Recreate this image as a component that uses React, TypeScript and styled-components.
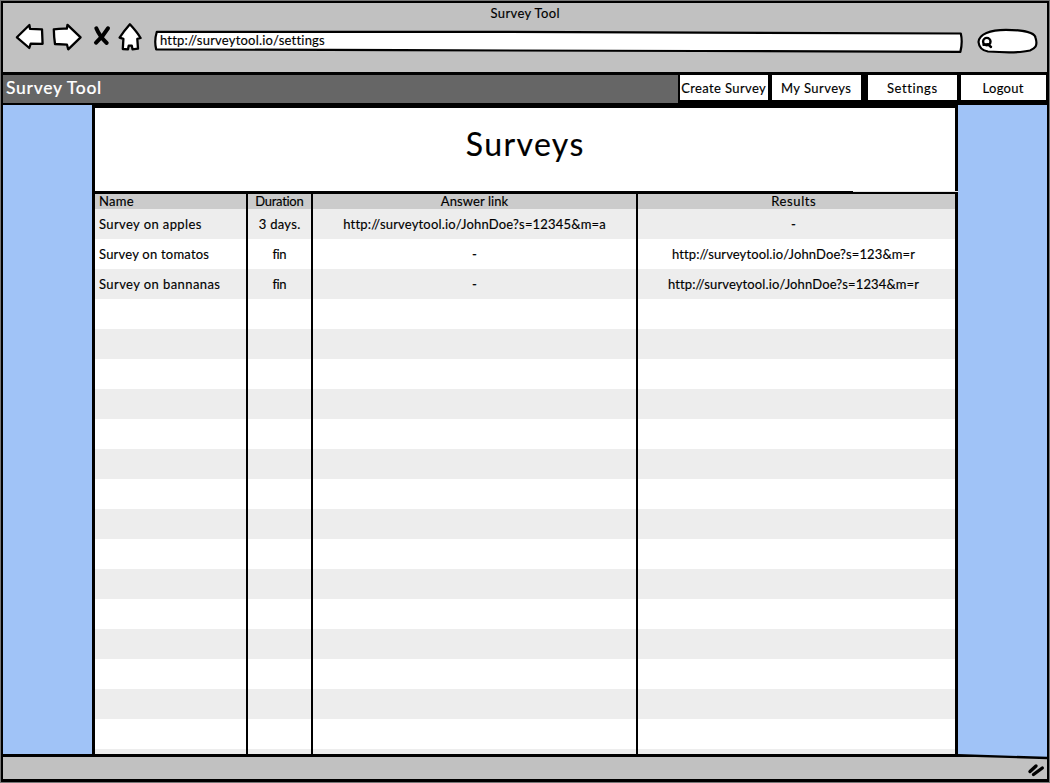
import React from "react";
import styled, { createGlobalStyle } from "styled-components";

const GlobalStyle = createGlobalStyle`
  * { box-sizing: border-box; }
  body { margin: 0; background: #fff; }
  #root { width: 1050px; height: 783px; overflow: hidden; }
`;

const Window = styled.div`
  width: 1050px;
  height: 783px;
  padding: 1px;
  display: flex;
  flex-direction: column;
  font-family: Lato, "Liberation Sans", sans-serif;
  font-size: 13px;
  font-weight: 400;
  color: #000;
  background: #777;
`;

const Frame = styled.div`
  flex: 1;
  display: flex;
  flex-direction: column;
  border: 2px solid #000;
  border-bottom-width: 3px;
`;

const Label = styled.span<{ $track?: number }>`
  letter-spacing: ${(p) => p.$track ?? 0}px;
  margin-right: ${(p) => -(p.$track ?? 0)}px;
  white-space: nowrap;
  -webkit-text-stroke: 0.15px currentColor;
`;

const Chrome = styled.header`
  height: 69px;
  flex: none;
  background: #c1c1c1;
`;

const WindowTitle = styled.div`
  height: 20px;
  display: flex;
  align-items: center;
  justify-content: center;
`;

const Controls = styled.div`
  display: flex;
  height: 34px;
`;

const ToolIcons = styled.svg`
  width: 148px;
  height: 34px;
  flex: none;
`;

const AddressBar = styled.div`
  position: relative;
  width: 814px;
  height: 34px;
  display: flex;
  align-items: flex-start;
  padding: 9px 0 0 9px;
  line-height: 16px;
`;

const Outline = styled.svg`
  position: absolute;
  left: 0;
  top: 0;
`;

const AddressText = styled(Label)`
  position: relative;
`;

const SearchPill = styled.svg`
  width: 76px;
  height: 34px;
  flex: none;
`;

const Nav = styled.nav`
  height: 33px;
  flex: none;
  display: flex;
  background: #666;
  border-top: 3px solid #000;
  border-bottom: 2px solid #000;
`;

const Brand = styled.div`
  flex: 1;
  padding: 0 0 0 3px;
  line-height: 26px;
  font-size: 17.5px;
  font-weight: 500;
  color: #fff;
`;

const NavButtons = styled.div`
  display: flex;
  gap: 4px;
  padding: 0 1px 3px 2px;
  background: #000;
`;

const NavButton = styled.button<{ $width: number; $gap?: number }>`
  width: ${(p) => p.$width}px;
  margin-left: ${(p) => p.$gap ?? 0}px;
  padding: 1px 1px 0 0;
  border: 0;
  background: #fff;
  font: inherit;
  color: #000;
  display: flex;
  align-items: center;
  justify-content: center;
`;

const Body = styled.main`
  height: 649px;
  flex: none;
  display: flex;
  justify-content: center;
  background: #a0c3f7;
`;

const Page = styled.section`
  width: 866px;
  margin-right: 1px;
  display: flex;
  flex-direction: column;
  background: #fff;
  border: solid #000;
  border-width: 3px 3px 0 3px;
`;

const PageTitle = styled.h1`
  position: relative;
  height: 83px;
  margin: 0;
  padding-bottom: 13px;
  display: flex;
  align-items: center;
  justify-content: center;
  font-size: 32px;
  font-weight: 400;

  /* hairline where the title panel's frame stops short of the table */
  &::after {
    content: "";
    position: absolute;
    right: -3px;
    bottom: -1px;
    width: 105px;
    height: 1px;
    background: #e4e4e4;
  }
`;

const Table = styled.div`
  flex: 1;
  min-height: 0;
  display: grid;
  grid-template-columns: 153px 65px 325px 1fr;
  border-top: 3px solid #000;
  overflow: hidden;
  background: linear-gradient(#cbcbcb 15px, transparent 15px),
    repeating-linear-gradient(#ededed 0 30px, #fff 30px 60px) 0 15px;
`;

const Column = styled.div<{ $align?: string; $inset?: number }>`
  display: flex;
  flex-direction: column;
  align-items: ${(p) => p.$align ?? "center"};
  padding-left: ${(p) => (p.$align ? 4.5 : 1)}px;
  padding-right: ${(p) => p.$inset ?? 0}px;
  border-right: 2px solid #000;
  &:last-child { border-right: 0; }
`;

const HeadCell = styled.div`
  height: 15px;
  line-height: 15px;
`;

const Cell = styled.div`
  height: 30px;
  line-height: 31px;
`;

const Footer = styled.footer`
  position: relative;
  flex: 1;
  display: flex;
  justify-content: flex-end;
  background: #c1c1c1;
  border-top: 3px solid #000;
`;

const FooterEdge = styled.svg`
  position: absolute;
  right: 0;
  top: -3px;
`;

const Grip = styled.svg`
  width: 22px;
  height: 22px;
`;

type Text = [string, number];

const columns: { head: Text; align?: string; inset?: number; cells: Text[] }[] = [
  {
    head: ["Name", 0.3],
    align: "flex-start",
    cells: [["Survey on apples", 0.4], ["Survey on tomatos", 0.22], ["Survey on bannanas", 0.42]],
  },
  { head: ["Duration", -0.3], cells: [["3 days.", 0.3], ["fin", -0.4], ["fin", -0.4]] },
  {
    head: ["Answer link", 0.1],
    cells: [["http://surveytool.io/JohnDoe?s=12345&m=a", 0.18], ["-", 0], ["-", 0]],
  },
  {
    head: ["Results", 0.6],
    inset: 6,
    cells: [["-", 0], ["http://surveytool.io/JohnDoe?s=123&m=r", 0.12], ["http://surveytool.io/JohnDoe?s=1234&m=r", 0.13]],
  },
];

const navItems: { text: Text; width: number; gap?: number }[] = [
  { text: ["Create Survey", 0.38], width: 88 },
  { text: ["My Surveys", 0.45], width: 89 },
  { text: ["Settings", 0.6], width: 89, gap: 3 },
  { text: ["Logout", 0.3], width: 85 },
];

export default function App() {
  return (
    <>
      <GlobalStyle />
      <Window>
        <Frame>
          <Chrome>
            <WindowTitle>
              <Label $track={0.37}>Survey Tool</Label>
            </WindowTitle>
            <Controls>
              <ToolIcons viewBox="3 23 148 34" fill="#fff" stroke="#000" strokeWidth="2.3" strokeLinejoin="round" strokeLinecap="round">
                <path d="M16.9 37.3 29.4 25 30 28.9 42 29.3 42.6 43.9 30.7 43.7 29.3 48Z" />
                <path d="M53.8 29.3Q60 28.5 66.8 28.7L67.5 24.8 80.6 37.3 68.2 49.3 67 44.7 55 44Q54 38 53.8 29.3Z" />
                <path d="M129.9 24.3Q137 32 140.6 38L137.3 38.9 138 48.7 132.5 49.3 131.8 45.7 128.7 45.7 128 49.3 122.8 49 123.4 38.9 119.6 37.6Q124 31 129.9 24.3Z" />
                <path d="M96.3 28.3Q100 37 106.7 43M108 28.3Q103.5 36 96 42.7" fill="none" strokeWidth="4" />
              </ToolIcons>
              <AddressBar>
                <Outline width="814" height="34" viewBox="151 23 814 34" fill="#fff" stroke="#000" strokeWidth="2.2" strokeLinejoin="round">
                  <path d="M156.8 31.8 500 31.9 960.8 33.5Q962.8 42 960.4 51.8L700 51 400 50.2 156.2 49.4Q154 41 156.8 31.8Z" />
                </Outline>
                <AddressText $track={0.21}>http://surveytool.io/settings</AddressText>
              </AddressBar>
              <SearchPill viewBox="965 23 76 34" fill="none" stroke="#000" strokeWidth="2.2" strokeLinecap="round">
                <path fill="#fff" d="M978.5 42C979 34 990 29.8 1006 29.8C1024 29.8 1035 33 1035.6 38C1038 46 1035 48.5 1030 50.5C1018 53.5 1000 52.3 988 51.5C982 50.5 979 47 978.5 42Z" />
                <circle cx="986.8" cy="41.6" r="3.7" strokeWidth="2.4" />
                <path d="M983.5 44.8 988 44.3 991 47" strokeWidth="2.4" />
              </SearchPill>
            </Controls>
          </Chrome>
          <Nav>
            <Brand>
              <Label $track={0.7}>Survey Tool</Label>
            </Brand>
            <NavButtons>
              {navItems.map((n) => (
                <NavButton key={n.text[0]} $width={n.width} $gap={n.gap}>
                  <Label $track={n.text[1]}>{n.text[0]}</Label>
                </NavButton>
              ))}
            </NavButtons>
          </Nav>
          <Body>
            <Page>
              <PageTitle>
                <Label $track={1.4}>Surveys</Label>
              </PageTitle>
              <Table>
                {columns.map((c) => (
                  <Column key={c.head[0]} $align={c.align} $inset={c.inset}>
                    <HeadCell>
                      <Label $track={c.head[1]}>{c.head[0]}</Label>
                    </HeadCell>
                    {c.cells.map(([text, track], i) => (
                      <Cell key={i}>
                        <Label $track={track}>{text}</Label>
                      </Cell>
                    ))}
                  </Column>
                ))}
              </Table>
            </Page>
          </Body>
          <Footer>
            <FooterEdge width="89" height="6" viewBox="0 0 89 6">
              <path d="M0 0H89V4.5L0 1Z" fill="#a0c3f7" />
              <path d="M0 3 89 5V6H0Z" fill="#c1c1c1" />
              <path d="M0 1.2 89 4" stroke="#000" strokeWidth="2.4" />
            </FooterEdge>
            <Grip viewBox="1025 757 22 22" stroke="#000" strokeWidth="3.4" strokeLinecap="round">
              <path d="M1030 771.5 1036 766M1033.5 774.5 1042.3 768" />
            </Grip>
          </Footer>
        </Frame>
      </Window>
    </>
  );
}
